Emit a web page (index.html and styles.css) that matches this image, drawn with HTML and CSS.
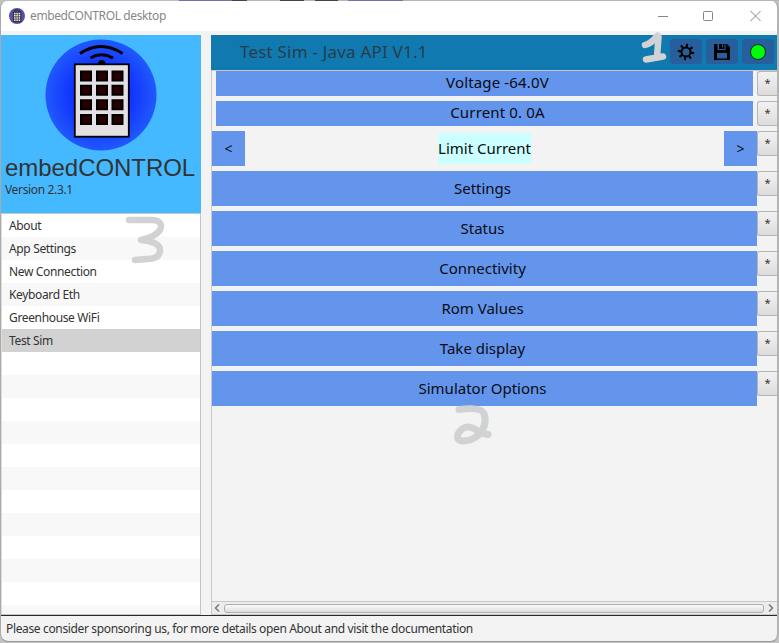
FILE: index.html
```html
<!DOCTYPE html>
<html lang="en">
<head>
<meta charset="utf-8">
<title>embedCONTROL desktop</title>
<link rel="stylesheet" href="styles.css">
</head>
<body>
<svg class="defs" width="0" height="0" aria-hidden="true">
  <defs>
    <radialGradient id="glow" cx="50%" cy="50%" r="50%">
      <stop offset="0.3" stop-color="#0a20ff"/>
      <stop offset="1" stop-color="#2059fc"/>
    </radialGradient>
    <symbol id="logo" viewBox="0 0 112 112">
      <circle cx="56" cy="56" r="55.5" fill="url(#glow)"/>
      <path d="M35 14.5Q56 0.5 77.500 14.500M45.500 19Q56 12.500 68 19" fill="none" stroke="#000" stroke-width="3"/>
      <path d="M53 25a3.700 4 0 0 1 7.400 0z"/>
      <rect x="29.800" y="25.300" width="54" height="72.400" fill="#e4dfe0" stroke="#000" stroke-width="1.800"/>
      <path d="M36 32.500h10v9H36zM52 32.500h10v9H52zM67.500 32.500h10v9h-10zM36 46.800h10v9H36zM52 46.800h10v9H52zM67.500 46.800h10v9h-10zM36 61.200h10v9H36zM52 61.200h10v9H52zM67.500 61.200h10v9h-10zM36 76h10v9H36zM52 76h10v9H52zM67.500 76h10v9h-10z" fill="#290000" stroke="#000" stroke-width="2"/>
    </symbol>
  </defs>
</svg>
<div class="window">
  <header class="titlebar">
    <svg class="app-icon" viewBox="0 0 16 16"><circle cx="8" cy="8" r="8" fill="#5551af"/><path d="M5 2.500q3-1.500 6 0" fill="none" stroke="#222" stroke-width=".8"/><path d="M4.500 3.800h7.500v10H4.500z" fill="#333" stroke="#222" stroke-width=".6"/><path d="M5 4.800h1.600v1.600H5zM7.300 4.800h1.600v1.600H7.300zM9.600 4.800h1.600v1.600H9.600zM5 7h1.600v1.600H5zM7.300 7h1.600v1.600H7.300zM9.600 7h1.600v1.600H9.600zM5 9.200h1.600v1.600H5zM7.300 9.200h1.600v1.600H7.300zM9.600 9.200h1.600v1.600H9.600zM5 11.400h1.600V13H5zM7.300 11.400h1.600V13H7.300zM9.600 11.400h1.600V13H9.600z" fill="#f0ece0"/></svg>
    <span class="title">embedCONTROL desktop</span>
    <svg class="controls" viewBox="0 0 104 12"><path d="M1 6.500h10M93.500 1l10 10M103.500 1l-10 10" /><rect x="46.500" y="1.500" width="9" height="9" rx="1"/></svg>
  </header>
  <div class="content">
    <aside class="sidebar">
      <div class="brand">
        <svg class="logo"><use href="#logo"/></svg>
        <div class="name">embedCONTROL</div>
        <div class="version">Version 2.3.1</div>
      </div>
      <ul class="list">
        <li>About</li>
        <li>App Settings</li>
        <li>New Connection</li>
        <li>Keyboard Eth</li>
        <li>Greenhouse WiFi</li>
        <li class="selected">Test Sim</li>
        <li></li><li></li><li></li><li></li><li></li><li></li>
        <li></li><li></li><li></li><li></li><li></li><li></li>
      </ul>
    </aside>
    <main class="main">
      <div class="toolbar">
        <h1>Test Sim - Java API V1.1</h1>
        <button><svg width="18" height="18" viewBox="0 0 18 18"><circle cx="9" cy="9" r="4.500" fill="none" stroke="#000" stroke-width="1.900"/><path d="M9 .8v3.500M9 13.700v3.500M.8 9h3.500M13.700 9h3.500M3.200 3.200l2.500 2.500M12.300 12.300l2.500 2.500M14.800 3.200l-2.500 2.500M5.700 12.300l-2.500 2.500" stroke="#000" stroke-width="2.100" transform="rotate(8 9 9)"/></svg></button>
        <button><svg width="16" height="16" viewBox="0 0 16 16"><path fill-rule="evenodd" d="M0 0h3.500v6h8V0H13l3 3v13H0zM3 9v5.500h10V9z"/><path d="M5 0h5.500v5H5z"/><path d="M8.500 .5v3" stroke="#1f65a0"/></svg></button>
        <button><svg width="16" height="16" viewBox="0 0 16 16"><circle cx="8" cy="8" r="7.500" fill="#00fc08" stroke="#082d18"/></svg></button>
      </div>
      <div class="panel">
        <div class="row short"><div class="item">Voltage -64.0V</div><button class="star">*</button></div>
        <div class="row short"><div class="item">Current 0. 0A</div><button class="star">*</button></div>
        <div class="row"><div class="picker"><span class="step">&lt;</span><span class="value">Limit Current</span><span class="step">&gt;</span></div><button class="star">*</button></div>
        <div class="row"><div class="item">Settings</div><button class="star">*</button></div>
        <div class="row"><div class="item">Status</div><button class="star">*</button></div>
        <div class="row"><div class="item">Connectivity</div><button class="star">*</button></div>
        <div class="row"><div class="item">Rom Values</div><button class="star">*</button></div>
        <div class="row"><div class="item">Take display</div><button class="star">*</button></div>
        <div class="row"><div class="item">Simulator Options</div><button class="star">*</button></div>
      </div>
      <div class="scrollbar">
        <svg width="6" height="8" viewBox="0 0 6 8"><path d="M5 .5L1.500 4 5 7.500"/></svg>
        <div class="thumb"></div>
        <svg width="6" height="8" viewBox="0 0 6 8"><path d="M1 .5L4.500 4 1 7.500"/></svg>
      </div>
    </main>
  </div>
  <footer class="status"><span>Please consider sponsoring us, for more details open About and visit the documentation</span></footer>
</div>
<svg class="marks" viewBox="0 0 779 643">
  <path d="M645 45q7-2 12-9q1-1 1.500 1l-1.500 20M646 59.500l17-3" stroke-width="6.500"/>
  <path d="M129 220h22q12 0 9.500 9q-3 7-19.500 11q20 2 19 11q-1 8-13 8l-12 1" stroke-width="6.500"/>
  <path d="M459 409.500q22-3 25 4q4 12-6 22q-8 6-16 5.500q-6-1-4-7q6-11 17-5q4 4 13 5.500" stroke-width="7"/>
</svg>
</body>
</html>
```
FILE: styles.css
```css
* { box-sizing: border-box; }
body {
  margin: 0;
  height: 643px;
  overflow: hidden;
  background: linear-gradient(90deg, #bdbdbd 179px, #7770a8 179px 232px, #48404d 232px 247px, #b5b5b5 247px 280px, #48404d 280px 304px, #b5b5b5 304px 315px, #48404d 315px 338px, #b5b5b5 338px 348px, #7770a8 348px 403px, #b5b5b5 403px) 0 0 / 100% 1px no-repeat #c4c4c4;
  font-family: "Noto Sans", sans-serif;
  font-size: 12px;
  color: #333;
}
button { font: inherit; padding: 0; border: 0; }
.defs { position: absolute; }
.window {
  display: flex;
  flex-direction: column;
  height: 642px;
  border: 1px solid #aaa;
  border-top-color: transparent;
  border-right: 2px solid #b4b4b4;
  border-bottom-color: #999;
  border-radius: 8px;
  overflow: hidden;
  background: #f3f3f3;
  background-clip: padding-box;
}
.titlebar {
  display: flex;
  align-items: center;
  height: 30px;
  padding: 0 16px 0 8px;
  background: #fff;
  color: #888;
}
.app-icon { width: 16px; height: 16px; margin-right: 5px; }
.title { flex: 1; line-height: 30px; letter-spacing: -.38px; white-space: nowrap; }
.controls { width: 104px; height: 12px; fill: none; stroke: #858585; }
.content { flex: 1; display: flex; gap: 10px; padding-top: 4px; min-height: 0; }
.sidebar { width: 200px; display: flex; flex-direction: column; }
.brand { height: 178px; padding: 4px 4px 0; background: #44b9ff; }
.logo { display: block; width: 112px; height: 112px; margin-left: 40px; }
.name {
  font: 24px/31px "Liberation Sans", sans-serif;
  margin-top: 1px;
  letter-spacing: -.05px;
  white-space: nowrap;
}
.version { line-height: 16px; letter-spacing: -.35px; margin-top: -1px; }
.list {
  flex: 1;
  min-height: 0;
  margin: 0;
  padding: 0;
  overflow: hidden;
  list-style: none;
  border: 1px solid #c5c5c5;
  border-left-color: #ddd;
  background: #fff;
}
.list li { height: 23px; padding-left: 7px; line-height: 23px; letter-spacing: -.35px; }
.list li:nth-child(even) { background: #f8f8f8; }
.list li.selected { background: #d2d2d2; }
.main { flex: 1; display: flex; flex-direction: column; min-width: 0; }
.toolbar {
  display: flex;
  align-items: center;
  gap: 4px;
  height: 35px;
  padding: 0 3px 2px 29px;
  background: #0f79b0;
}
.toolbar h1 { flex: 1; margin: 0; font-size: 17px; font-weight: 400; line-height: 33px; letter-spacing: .2px; color: #293d49; }
.toolbar button {
  display: flex;
  align-items: center;
  justify-content: center;
  width: 32px;
  height: 25px;
  border-radius: 4px;
  background: #275e9c;
}
.panel {
  flex: 1;
  display: flex;
  flex-direction: column;
  gap: 5px;
  border: solid #c8c8c8;
  border-width: 1px 0 0 1px;
}
.row { display: flex; height: 35px; font-size: 15px; color: #080b12; }
.item {
  flex: 1;
  display: flex;
  align-items: center;
  justify-content: center;
  padding: 0 4px 2px 0;
  background: #6495ed;
}
.short { height: 25px; }
.short .item { margin: 0 4px; padding: 0 0 3px 26px; letter-spacing: .15px; }
.picker { flex: 1; display: flex; align-items: center; justify-content: space-between; }
.step { width: 33px; line-height: 35px; text-align: center; background: #6495ed; font-size: 14px; }
.value { height: 31px; line-height: 30px; background: #cff; white-space: nowrap; }
.star {
  width: 20px;
  height: 25px;
  padding-bottom: 2px;
  border: 1px solid #b5b5b5;
  border-right: 0;
  border-radius: 3px 0 0 3px;
  background: linear-gradient(#f2f2f2, #dcdcdc);
  color: #333;
  font-size: 11px;
}
.scrollbar {
  display: flex;
  align-items: center;
  gap: 4px;
  height: 14px;
  padding: 0 3px 0 2px;
  border: solid #c8c8c8;
  border-width: 1px 0 1px 1px;
  background: #ececec;
}
.scrollbar svg { fill: none; stroke: #777; stroke-width: 1.5; }
.thumb {
  flex: 1;
  height: 9px;
  border: 1px solid #b0b0b0;
  border-radius: 3px;
  background: linear-gradient(#fafafa, #dedede);
}
.status {
  height: 26px;
  padding-left: 5px;
  border-top: 1px solid #2a2a2a;
  line-height: 26px;
  letter-spacing: -.355px;
  white-space: nowrap;
}
.marks {
  position: absolute;
  left: 0;
  top: 0;
  width: 779px;
  height: 643px;
  fill: none;
  stroke: #d0d2d3;
  stroke-linecap: round;
  stroke-linejoin: round;
  pointer-events: none;
}
```
